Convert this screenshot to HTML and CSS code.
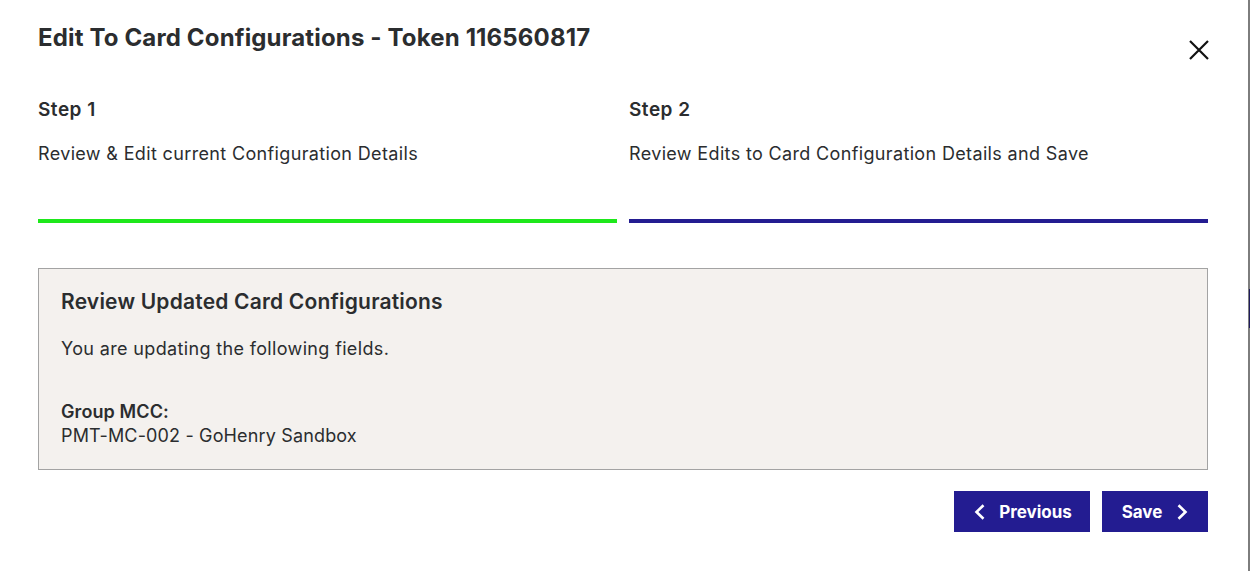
FILE: index.html
```html
<!DOCTYPE html>
<html>
<head>
<meta charset="utf-8">
<link rel="stylesheet" href="styles.css">
</head>
<body>
<div class="modal">
  <div class="header">
    <h1 class="title">Edit To Card Configurations - Token 116560817</h1>
    <button class="close" aria-label="Close">
      <svg width="22" height="22" viewBox="0 0 22 22"><path d="M2 2 L20 20 M20 2 L2 20" stroke="#111" stroke-width="2.2" fill="none"/></svg>
    </button>
  </div>
  <div class="steps">
    <div class="step done">
      <div class="step-label">Step 1</div>
      <div class="step-desc">Review &amp; Edit current Configuration Details</div>
      <div class="bar"></div>
    </div>
    <div class="step active">
      <div class="step-label">Step 2</div>
      <div class="step-desc">Review Edits to Card Configuration Details and Save</div>
      <div class="bar"></div>
    </div>
  </div>
  <div class="review">
    <h2 class="review-title">Review Updated Card Configurations</h2>
    <p class="review-text">You are updating the following fields.</p>
    <div class="field">
      <div class="field-label">Group MCC:</div>
      <div class="field-value">PMT-MC-002 - GoHenry Sandbox</div>
    </div>
  </div>
  <div class="actions">
    <button class="btn btn-prev">
      <svg width="11" height="16" viewBox="0 0 11 16"><path d="M9.5 1.2 L2.5 8 L9.5 14.8" stroke="#fff" stroke-width="2.6" fill="none"/></svg>
      <span>Previous</span>
    </button>
    <button class="btn btn-next">
      <span>Save</span>
      <svg width="11" height="16" viewBox="0 0 11 16"><path d="M1.5 1.2 L8.5 8 L1.5 14.8" stroke="#fff" stroke-width="2.6" fill="none"/></svg>
    </button>
  </div>
</div>
<div class="edge"><div class="edge-mark"></div></div>
</body>
</html>
```
FILE: styles.css
```css
* { box-sizing: border-box; }
html, body { margin: 0; padding: 0; }
body {
  width: 1250px;
  height: 571px;
  overflow: hidden;
  background: #fff;
  font-family: "Inter", "Liberation Sans", sans-serif;
  color: #2b2d2f;
  display: flex;
}
.modal {
  width: 1248px;
  height: 571px;
  padding: 0 40px 0 38px;
  background: #fff;
}
.edge {
  width: 2px;
  height: 571px;
  background: #7d7d7d;
  position: relative;
}
.edge-mark {
  position: absolute;
  left: 1px;
  top: 289px;
  width: 1px;
  height: 39px;
  background: #1e1a5c;
}
.header {
  display: flex;
  justify-content: space-between;
  align-items: flex-start;
  height: 88px;
}
.title {
  margin: 23px 0 0;
  font-size: 24px;
  font-weight: 700;
  letter-spacing: 0.15px;
  line-height: 30px;
}
.close {
  margin-top: 39px;
  margin-right: -2px;
  border: 0;
  background: none;
  padding: 0;
  width: 22px;
  height: 22px;
  cursor: pointer;
}
.steps {
  display: flex;
  gap: 12px;
}
.step { flex: 1; }
.step-label {
  font-size: 19px;
  font-weight: 600;
  letter-spacing: 0.5px;
  line-height: 24px;
  height: 24px;
  margin-top: 10px;
}
.step-desc {
  font-size: 18px;
  letter-spacing: 0.35px;
  line-height: 24px;
  margin-top: 20px;
}
.bar {
  height: 4px;
  margin-top: 53px;
}
.done .bar { background: #1ee81b; }
.active .bar { background: #231c91; }
.review {
  margin-top: 45px;
  height: 202px;
  background: #f4f1ee;
  border: 1px solid #a3a3a3;
  padding: 21px 22px 20px;
}
.review-title {
  margin: 0;
  font-size: 21px;
  font-weight: 600;
  letter-spacing: 0.2px;
  line-height: 24px;
}
.review-text {
  margin: 23px 0 0;
  font-size: 18px;
  letter-spacing: 0.35px;
  line-height: 24px;
}
.field { margin-top: 39px; }
.field-label {
  font-size: 18px;
  font-weight: 600;
  letter-spacing: 0.1px;
  line-height: 24px;
}
.field-value {
  font-size: 18px;
  letter-spacing: 0.15px;
  line-height: 24px;
}
.actions {
  display: flex;
  justify-content: flex-end;
  gap: 12px;
  margin-top: 21px;
}
.btn {
  display: flex;
  align-items: center;
  justify-content: center;
  height: 41px;
  padding: 0;
  background: #231c91;
  color: #fff;
  border: 0;
  font-family: "Inter", "Liberation Sans", sans-serif;
  font-size: 17px;
  font-weight: 700;
  cursor: pointer;
}
.btn-prev { width: 136px; gap: 14px; padding-left: 2px; }
.btn-next { width: 106px; gap: 15px; padding-left: 0; }
```
